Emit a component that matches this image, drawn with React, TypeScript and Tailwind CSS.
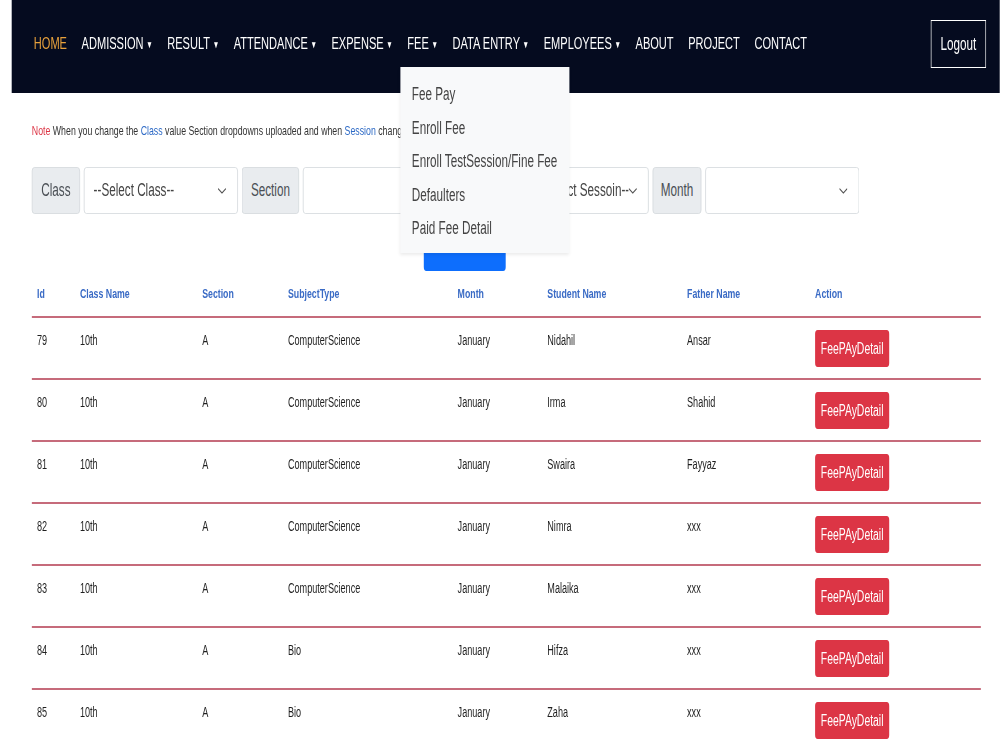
type Row = {
  id: number;
  className: string;
  section: string;
  subject: string;
  month: string;
  student: string;
  father: string;
};

const rows: Row[] = [
  { id: 79, className: "10th", section: "A", subject: "ComputerScience", month: "January", student: "Nidahil", father: "Ansar" },
  { id: 80, className: "10th", section: "A", subject: "ComputerScience", month: "January", student: "Irma", father: "Shahid" },
  { id: 81, className: "10th", section: "A", subject: "ComputerScience", month: "January", student: "Swaira", father: "Fayyaz" },
  { id: 82, className: "10th", section: "A", subject: "ComputerScience", month: "January", student: "Nimra", father: "xxx" },
  { id: 83, className: "10th", section: "A", subject: "ComputerScience", month: "January", student: "Malaika", father: "xxx" },
  { id: 84, className: "10th", section: "A", subject: "Bio", month: "January", student: "Hifza", father: "xxx" },
  { id: 85, className: "10th", section: "A", subject: "Bio", month: "January", student: "Zaha", father: "xxx" },
];

const navItems = [
  { label: "HOME", caret: false, active: true },
  { label: "ADMISSION", caret: true },
  { label: "RESULT", caret: true },
  { label: "ATTENDANCE", caret: true },
  { label: "EXPENSE", caret: true },
  { label: "FEE", caret: true, open: true },
  { label: "DATA ENTRY", caret: true },
  { label: "EMPLOYEES", caret: true },
  { label: "ABOUT", caret: false },
  { label: "PROJECT", caret: false },
  { label: "CONTACT", caret: false },
];

const feeMenu = ["Fee Pay", "Enroll Fee", "Enroll TestSession/Fine Fee", "Defaulters", "Paid Fee Detail"];

const headers = ["Id", "Class Name", "Section", "SubjectType", "Month", "Student Name", "Father Name", "Action"];

// table columns
const cols = "grid grid-cols-[66px_188px_132px_261px_138px_215px_197px_263px]";

const Label = ({ text, w }: { text: string; w: string }) => (
  <div className={`${w} h-[47px] flex items-center justify-center bg-[#e9ecef] border border-[#d5d9dd] rounded text-[18px] text-[#4a4f55]`}>
    {text}
  </div>
);

const Select = ({ text, w }: { text: string; w: string }) => (
  <div className={`${w} h-[47px] flex items-center justify-between pl-[14px] pr-[17px] bg-white border border-[#d5d9dd] rounded text-[18px] text-[#444]`}>
    <span className="whitespace-nowrap overflow-hidden">{text}</span>
    <svg width="13" height="6" viewBox="0 0 13 6" fill="none" className="shrink-0">
      <path d="M1 1l5.5 4 5.5-4" stroke="#555" strokeWidth="1.5" strokeLinecap="round" strokeLinejoin="round" />
    </svg>
  </div>
);

export default function App() {
  return (
    <div className="w-[1000px] h-[750px] overflow-hidden bg-white">
      {/* page is laid out wide and squeezed horizontally */}
      <div className="w-[1538px] origin-top-left scale-x-[0.65] font-['Liberation_Sans',Arial,sans-serif]">
        {/* top navbar */}
        <nav className="ml-[18px] h-[93px] bg-[#050b1f] flex items-center pl-[34px] pr-[21px] pb-[5px]">
          <ul className="flex items-center gap-[22.5px] text-[17px]">
            {navItems.map((item) => (
              <li key={item.label} className="relative">
                <span className={`flex items-center gap-[4px] whitespace-nowrap ${item.active ? "text-[#e8a13c]" : "text-white"}`}>
                  {item.label}
                  {item.caret && <span className="text-[10px]">▼</span>}
                </span>
                {item.open && (
                  <div className="absolute left-[-11px] top-[36px] z-10 w-[260px] h-[186px] bg-[#f8f9fa] shadow-[0_2px_4px_rgba(0,0,0,0.08)] flex flex-col pt-[17px] pl-[18px] gap-[13.5px]">
                    {feeMenu.map((m) => (
                      <span key={m} className="text-[18px] leading-[20px] text-[#444] whitespace-nowrap">
                        {m}
                      </span>
                    ))}
                  </div>
                )}
              </li>
            ))}
          </ul>
          <button className="ml-auto h-[48px] w-[85px] border border-white text-white text-[18px]">Logout</button>
        </nav>

        <main className="px-[49px]">
          <p className="mt-[28px] text-[13.5px] text-[#333] whitespace-nowrap">
            <span className="text-[#dc3545]">Note</span> When you change the <span className="text-[#2f6bc6]">Class</span> value Section dropdowns uploaded and when{" "}
            <span className="text-[#2f6bc6]">Session</span> changes Fee list is uploaded.
          </p>

          {/* filters */}
          <div className="mt-[26px] flex gap-[6px]">
            <Label text="Class" w="w-[74px]" />
            <Select text="--Select Class--" w="w-[237px]" />
            <Label text="Section" w="w-[88px]" />
            <Select text="" w="w-[237px]" />
            <Label text="Session" w="w-[95px]" />
            <Select text="--Select Sessoin--" w="w-[188px]" />
            <Label text="Month" w="w-[75px]" />
            <Select text="" w="w-[237px]" />
          </div>

          <div className="mt-[17px] pl-[603px]">
            <button className="w-[126px] h-[40px] bg-[#0d6efd] rounded text-white text-[17px] flex justify-center pt-[1px]">Search</button>
          </div>

          {/* fee table */}
          <div className="w-[1460px]">
            <div className={`${cols} h-[45px] items-center text-[13.5px] text-[#3a6bc5] font-bold`}>
              {headers.map((h) => (
                <span key={h} className="pl-[8px]">{h}</span>
              ))}
            </div>
            {rows.map((r) => (
              <div key={r.id} className={`${cols} h-[62px] border-t-2 border-[#c66b7b] text-[14px] leading-[16px] text-[#1f1f1f]`}>
                <span className="pl-[8px] pt-[14px]">{r.id}</span>
                <span className="pl-[8px] pt-[14px]">{r.className}</span>
                <span className="pl-[8px] pt-[14px]">{r.section}</span>
                <span className="pl-[8px] pt-[14px]">{r.subject}</span>
                <span className="pl-[8px] pt-[14px]">{r.month}</span>
                <span className="pl-[8px] pt-[14px]">{r.student}</span>
                <span className="pl-[8px] pt-[14px]">{r.father}</span>
                <div className="pl-[8px] pt-[12px]">
                  <button className="w-[114px] h-[37px] bg-[#dc3545] rounded text-white text-[16px]">FeePAyDetail</button>
                </div>
              </div>
            ))}
          </div>
        </main>
      </div>
    </div>
  );
}
